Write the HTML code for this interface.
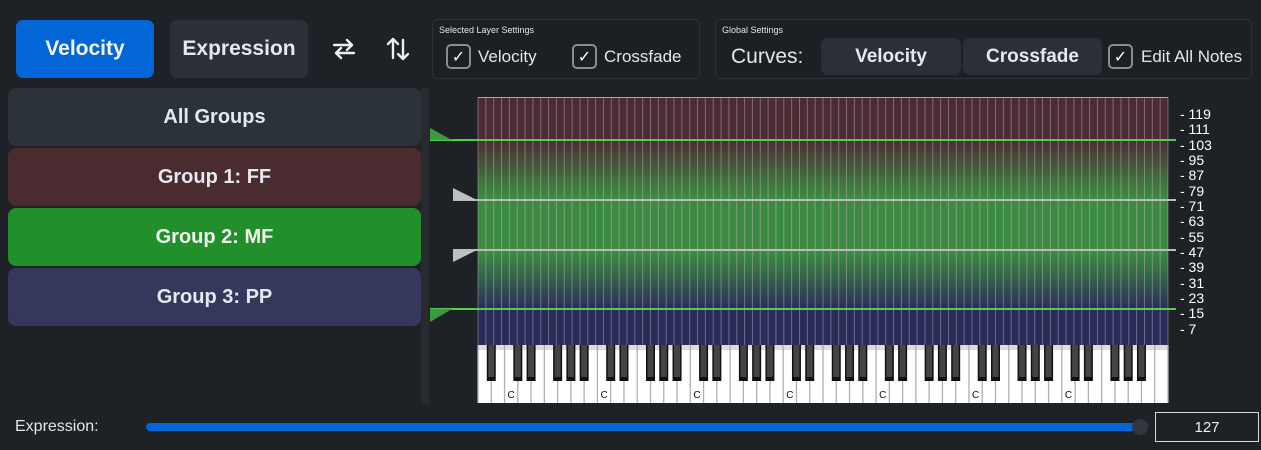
<!DOCTYPE html>
<html><head><meta charset="utf-8"><style>
*{margin:0;padding:0;box-sizing:border-box}
body{width:1261px;height:450px;background:#1e2125;font-family:"Liberation Sans",sans-serif;position:relative;overflow:hidden;color:#e6eaf0}
.btn{position:absolute;border-radius:7px;display:flex;align-items:center;justify-content:center;font-weight:bold;font-size:21px}
.grp{position:absolute;left:8px;width:413px;height:58px;border-radius:8px;display:flex;align-items:center;justify-content:center;font-weight:bold;font-size:20px;color:#e4e8ef}
.panel{position:absolute;border:1px solid #2e3238;border-radius:6px;background:#1c1f23}
.ptitle{position:absolute;font-size:9px;color:#e6e6e6;top:5px;left:6px}
.cb{position:absolute;width:25px;height:25px;border:2px solid #8a8e94;border-radius:5px;display:flex;align-items:center;justify-content:center;font-size:16px;color:#fff}
.lbl{position:absolute;font-size:17px;color:#e6e6e6}
.num{position:absolute;left:1180px;font-size:14px;color:#fff;line-height:14px}
</style></head><body>
<div class="btn" style="left:16px;top:20px;width:138px;height:58px;background:#0366d6;color:#f4f6fa">Velocity</div>
<div class="btn" style="left:170px;top:20px;width:138px;height:58px;background:#2b3038;color:#e4e8ef">Expression</div>
<svg style="position:absolute;left:331px;top:37px" width="26" height="24" viewBox="0 0 26 24" fill="none" stroke="#eee" stroke-width="2.4" stroke-linecap="round" stroke-linejoin="round"><path d="M3 8H21M16 3L21 8L16 13M23 16H5M10 11L5 16L10 21"/></svg>
<svg style="position:absolute;left:386px;top:36px" width="24" height="26" viewBox="0 0 24 26" fill="none" stroke="#eee" stroke-width="2.4" stroke-linecap="round" stroke-linejoin="round"><path d="M7 22V3M2 8L7 3L12 8M17 4V23M12 18L17 23L22 18"/></svg>

<div class="panel" style="left:432px;top:19px;width:268px;height:60px"><div class="ptitle">Selected Layer Settings</div></div>
<div class="cb" style="left:446px;top:44px">✓</div><div class="lbl" style="left:478px;top:47px">Velocity</div>
<div class="cb" style="left:572px;top:44px">✓</div><div class="lbl" style="left:604px;top:47px">Crossfade</div>

<div class="panel" style="left:715px;top:19px;width:537px;height:60px"><div class="ptitle">Global Settings</div></div>
<div class="lbl" style="left:731px;top:45px;font-size:21px">Curves:</div>
<div class="btn" style="left:821px;top:38px;width:140px;height:37px;background:#2b3038;font-size:19px;color:#e4e8ef">Velocity</div>
<div class="btn" style="left:963px;top:38px;width:139px;height:37px;background:#2b3038;font-size:19px;color:#e4e8ef">Crossfade</div>
<div class="cb" style="left:1108px;top:44px">✓</div><div class="lbl" style="left:1141px;top:47px">Edit All Notes</div>

<div class="grp" style="top:88px;background:#2c323a">All Groups</div>
<div class="grp" style="top:148px;background:#4a2b2f">Group 1: FF</div>
<div class="grp" style="top:208px;background:#21902a;color:#f2f5f2">Group 2: MF</div>
<div class="grp" style="top:268px;background:#36385b">Group 3: PP</div>
<div style="position:absolute;left:421px;top:88px;width:8px;height:316px;background:#272a2f"></div>

<svg id="g" style="position:absolute;left:0;top:0" width="1261" height="450"></svg>

<div class="num" style="top:107px">- 119</div>
<div class="num" style="top:122px">- 111</div>
<div class="num" style="top:138px">- 103</div>
<div class="num" style="top:153px">- 95</div>
<div class="num" style="top:168px">- 87</div>
<div class="num" style="top:184px">- 79</div>
<div class="num" style="top:199px">- 71</div>
<div class="num" style="top:214px">- 63</div>
<div class="num" style="top:230px">- 55</div>
<div class="num" style="top:245px">- 47</div>
<div class="num" style="top:260px">- 39</div>
<div class="num" style="top:276px">- 31</div>
<div class="num" style="top:291px">- 23</div>
<div class="num" style="top:306px">- 15</div>
<div class="num" style="top:322px">- 7</div>

<div style="position:absolute;left:15px;top:418px;font-size:16px;color:#e6e6e6">Expression:</div>
<div style="position:absolute;left:146px;top:423px;width:994px;height:8px;background:#0366d6;border-radius:4px"></div>
<div style="position:absolute;left:1132px;top:419px;width:16px;height:16px;background:#33363c;border-radius:50%"></div>
<div style="position:absolute;left:1155px;top:412px;width:104px;height:30px;border:1px solid #d8d8d8;display:flex;align-items:center;justify-content:center;font-size:15px;color:#eee">127</div>

<script>
var s='',X=478,W=690,T=97,B=345;
s+='<defs><linearGradient id="lg" gradientUnits="userSpaceOnUse" x1="0" y1="97" x2="0" y2="345">'+
'<stop offset="0" stop-color="#4b2c34"/><stop offset="0.17" stop-color="#4b2c34"/><stop offset="0.4" stop-color="#3c8a42"/>'+
'<stop offset="0.63" stop-color="#3c8a42"/><stop offset="0.86" stop-color="#292b59"/><stop offset="1" stop-color="#292b59"/></linearGradient></defs>';
s+='<rect x="'+X+'" y="'+T+'" width="'+W+'" height="'+(B-T)+'" fill="url(#lg)"/>';
for(var i=0;i<=88;i++){var x=X+i*W/88;s+='<line x1="'+x+'" y1="'+T+'" x2="'+x+'" y2="'+B+'" stroke="rgba(220,200,210,0.4)" stroke-width="1"/>';}
s+='<line x1="'+X+'" y1="97.5" x2="'+(X+W)+'" y2="97.5" stroke="#aaa"/>';
s+='<line x1="430" y1="140" x2="1176" y2="140" stroke="#4fd04a" stroke-width="2"/>';
s+='<line x1="430" y1="309" x2="1176" y2="309" stroke="#4fd04a" stroke-width="2"/>';
s+='<line x1="453" y1="200" x2="1176" y2="200" stroke="#bbb" stroke-width="2"/>';
s+='<line x1="453" y1="250" x2="1176" y2="250" stroke="#bbb" stroke-width="2"/>';
s+='<polygon points="430,128 430,140 452,140" fill="#3c9a40"/>';
s+='<polygon points="430,309 430,322 452,309" fill="#3c9a40"/>';
s+='<polygon points="453,188 453,200 477,200" fill="#c0c0c0"/>';
s+='<polygon points="453,250 453,262 477,250" fill="#c0c0c0"/>';
var wk=W/52,KT=345,KB=403;
s+='<rect x="'+X+'" y="'+KT+'" width="'+W+'" height="'+(KB-KT)+'" fill="#fff"/>';
s+='<rect x="'+X+'" y="'+KT+'" width="'+W+'" height="5" fill="#ddd"/>';
for(var j=0;j<=52;j++){var x=X+j*wk;s+='<line x1="'+x+'" y1="'+KT+'" x2="'+x+'" y2="'+KB+'" stroke="#b0b0b0" stroke-width="1.3"/>';}
var names='ABCDEFG';
for(var j=0;j<52;j++){var n=names[j%7];var x=X+j*wk;
 if(n=='C'&&j<51){s+='<text x="'+(x+wk/2)+'" y="398" font-size="10" font-family="Liberation Sans,sans-serif" fill="#111" text-anchor="middle">C</text>';}
 if((n=='A'||n=='C'||n=='D'||n=='F'||n=='G')&&j<51){var bx=X+(j+1)*wk-4.5;
  s+='<rect x="'+bx+'" y="'+KT+'" width="9" height="36" fill="#111"/><rect x="'+(bx+1.5)+'" y="'+KT+'" width="6" height="32" fill="#444"/>';}
}
document.getElementById('g').innerHTML=s;
</script>
</body></html>
